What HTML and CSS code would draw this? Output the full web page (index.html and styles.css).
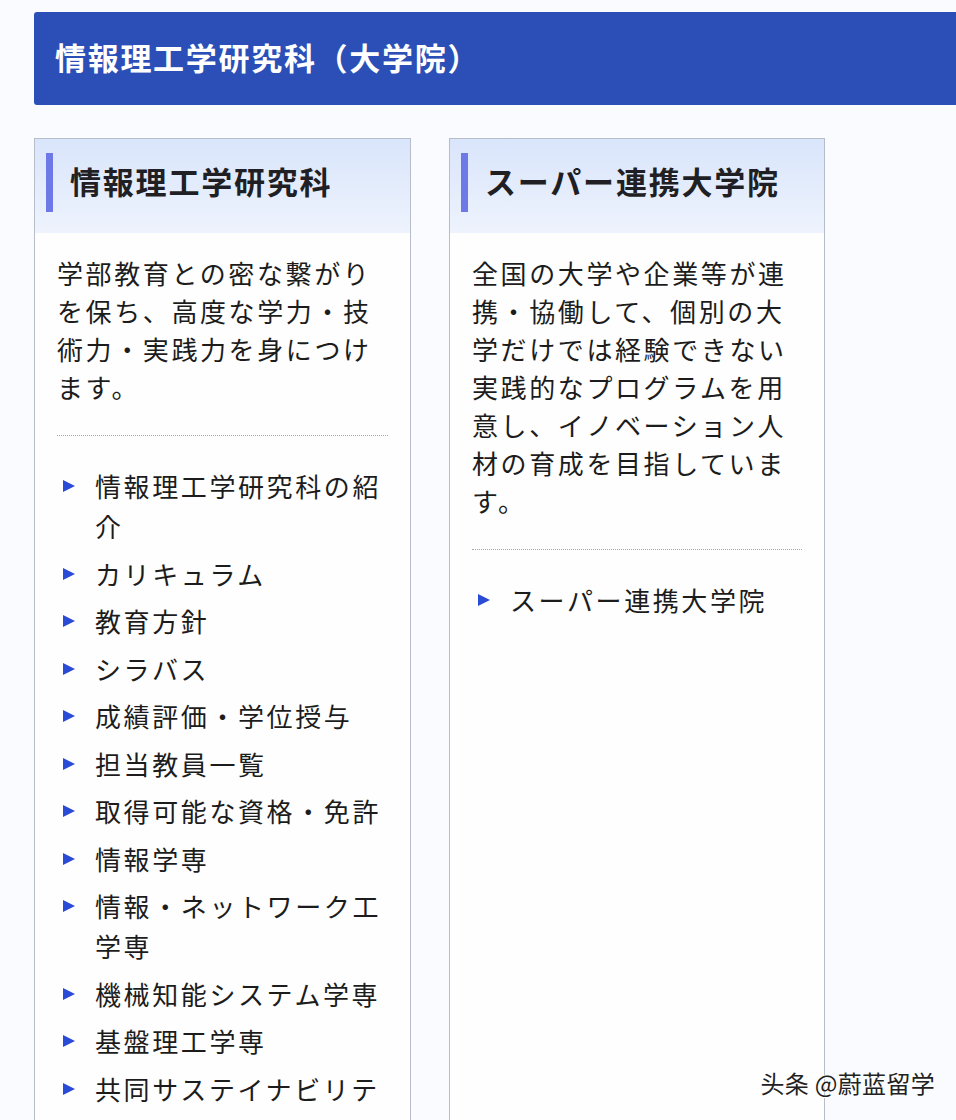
FILE: index.html
```html
<!DOCTYPE html>
<html lang="ja">
<head>
<meta charset="utf-8">
<title>情報理工学研究科（大学院）</title>
<link rel="stylesheet" href="styles.css">
</head>
<body>
<div class="page">
  <div class="banner"><h1 class="banner-title">情報理工学研究科（大学院）</h1></div>
  <div class="columns">
    <section class="card">
      <div class="card-head"><span class="accent"></span><h2 class="card-title">情報理工学研究科</h2></div>
      <div class="card-body">
        <p class="lead">学部教育との密な繋がりを保ち、高度な学力・技術力・実践力を身につけます。</p>
        <hr class="dots">
        <ul class="links">
          <li>情報理工学研究科の紹介</li>
          <li>カリキュラム</li>
          <li>教育方針</li>
          <li>シラバス</li>
          <li>成績評価・学位授与</li>
          <li>担当教員一覧</li>
          <li>取得可能な資格・免許</li>
          <li>情報学専</li>
          <li>情報・ネットワーク工学専</li>
          <li>機械知能システム学専</li>
          <li>基盤理工学専</li>
          <li>共同サステイナビリテ</li>
        </ul>
      </div>
    </section>
    <section class="card">
      <div class="card-head"><span class="accent"></span><h2 class="card-title">スーパー連携大学院</h2></div>
      <div class="card-body">
        <p class="lead">全国の大学や企業等が連携・協働して、個別の大学だけでは経験できない実践的なプログラムを用意し、イノベーション人材の育成を目指しています。</p>
        <hr class="dots">
        <ul class="links">
          <li>スーパー連携大学院</li>
        </ul>
      </div>
    </section>
  </div>
</div>
<div class="watermark">头条 @蔚蓝留学</div>
</body>
</html>
```

FILE: styles.css
```css
html, body {
  margin: 0;
  height: 100%;
  overflow: hidden;
}
body {
  background: #fafbfe;
  font-family: "Noto Sans CJK JP", "Noto Sans", sans-serif;
  color: #1c1c1c;
  position: relative;
}
.page {
  height: 100%;
  box-sizing: border-box;
  padding: 12px 0 0 34px;
  display: flex;
  flex-direction: column;
}
.banner {
  height: 93px;
  background: #2b4fb7;
  border-radius: 3px 0 0 3px;
  display: flex;
  align-items: center;
  padding-left: 21px;
  flex: none;
}
.banner-title {
  margin: 0;
  color: #fff;
  font-size: 31px;
  font-weight: 700;
  letter-spacing: 1.7px;
  line-height: 1;
  padding-bottom: 5px;
}
.columns {
  margin-top: 33px;
  flex: 1;
  display: flex;
  gap: 38px;
}
.card {
  width: 377px;
  box-sizing: border-box;
  border: 1px solid #b7bdcb;
  border-bottom: none;
  background: #fefefe;
}
.card + .card {
  width: 376px;
}
.card-head {
  height: 94px;
  box-sizing: border-box;
  background: linear-gradient(#d9e5fb, #eef3fd);
  display: flex;
  align-items: flex-start;
  padding: 14px 0 0 11px;
}
.accent {
  width: 7px;
  height: 59px;
  background: #6c79e6;
  flex: none;
}
.card-title {
  margin: 0 0 0 17px;
  font-size: 31px;
  font-weight: 600;
  letter-spacing: 1.8px;
  line-height: 55px;
  color: #1f1f24;
}
.card-body {
  padding: 21px 22px 0;
}
.lead {
  margin: 0;
  font-size: 26px;
  line-height: 38px;
  letter-spacing: 2.6px;
}
.dots {
  margin: 29px 0 0;
  border: none;
  border-top: 1px dotted #a9a9ad;
  height: 0;
}
.links {
  list-style: none;
  margin: 30px 0 0;
  padding: 0;
}
.links li {
  display: flex;
  font-size: 26px;
  line-height: 40px;
  letter-spacing: 2.6px;
  margin-bottom: 7.5px;
}
.links li::before {
  content: "";
  flex: none;
  width: 0;
  height: 0;
  border-left: 12px solid #2a4bd6;
  border-top: 6px solid transparent;
  border-bottom: 6px solid transparent;
  margin: 14px 20px 0 6px;
}
.watermark {
  position: absolute;
  right: 21px;
  bottom: 20px;
  font-family: "Noto Sans CJK SC", sans-serif;
  font-size: 24px;
  color: #222;
  text-shadow: 0 0 2px #fff, 1px 1px 0 #fff;
  letter-spacing: 0.3px;
}
```
